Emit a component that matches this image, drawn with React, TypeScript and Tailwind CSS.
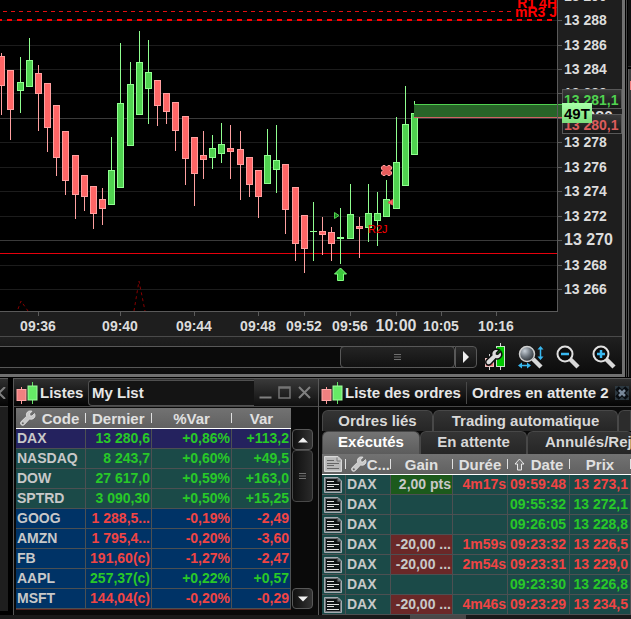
import React, { useState } from 'react';

interface Candle {
  x: number;
  high: number;
  top: number;
  bottom: number;
  low: number;
  up: boolean;
}

interface Quote {
  code: string;
  last: string;
  pct: string;
  change: string;
  up: boolean;
  group: 'selected' | 'index' | 'stock';
}

interface Order {
  id: number;
  gain: string;
  duration: string;
  time: string;
  price: string;
  buy: boolean;
}

const c = (x: number, high: number, top: number, bottom: number, low: number, up = false): Candle => ({
  x, high, top, bottom, low, up,
});

const candles: Candle[] = [
  c(1, 53, 56, 86, 115),
  c(10, 70, 70, 110, 140),
  c(20, 57, 82, 91, 113, true),
  c(29, 38, 60, 87, 87, true),
  c(38, 65, 73, 94, 131),
  c(47, 83, 83, 128, 152),
  c(56, 105, 105, 158, 176),
  c(65, 131, 131, 181, 195),
  c(75, 155, 155, 195, 219),
  c(84, 175, 175, 197, 211),
  c(93, 186, 186, 214, 229),
  c(102, 188, 199, 209, 225),
  c(111, 137, 170, 205, 205, true),
  c(120, 43, 103, 188, 188, true),
  c(130, 62, 84, 146, 146, true),
  c(139, 31, 62, 115, 115, true),
  c(148, 40, 72, 89, 124, true),
  c(157, 80, 80, 106, 126),
  c(166, 93, 93, 112, 124),
  c(175, 102, 102, 131, 151),
  c(185, 116, 116, 159, 185),
  c(194, 137, 137, 174, 206),
  c(203, 131, 155, 160, 179),
  c(212, 135, 148, 158, 169, true),
  c(221, 123, 144, 154, 163, true),
  c(230, 125, 148, 152, 179),
  c(240, 131, 149, 165, 200),
  c(249, 157, 157, 185, 197),
  c(258, 170, 170, 197, 218),
  c(267, 129, 155, 184, 184, true),
  c(276, 125, 160, 170, 193, true),
  c(285, 164, 164, 210, 234),
  c(295, 187, 187, 244, 261),
  c(304, 215, 215, 249, 273),
  c(313, 202, 231, 232, 261, true),
  c(322, 217, 231, 235, 255),
  c(331, 227, 232, 244, 261),
  c(340, 208, 237, 239, 264, true),
  c(350, 184, 214, 239, 239, true),
  c(359, 217, 226, 229, 258),
  c(368, 184, 213, 228, 242, true),
  c(377, 192, 213, 221, 246, true),
  c(386, 180, 199, 217, 217, true),
  c(396, 117, 162, 209, 209, true),
  c(405, 86, 124, 186, 186, true),
  c(414, 101, 113, 155, 155, true),
];

const priceLevels = [
  { y: -4, label: '13 290' },
  { y: 20, label: '13 288' },
  { y: 45, label: '13 286' },
  { y: 69, label: '13 284' },
  { y: 93, label: '13 282' },
  { y: 118, label: '13 280', major: true },
  { y: 142, label: '13 278' },
  { y: 167, label: '13 276' },
  { y: 191, label: '13 274' },
  { y: 216, label: '13 272' },
  { y: 240, label: '13 270', major: true },
  { y: 265, label: '13 268' },
  { y: 289, label: '13 266' },
];

const timeTicks = [
  { x: 38, label: '09:36' },
  { x: 120, label: '09:40' },
  { x: 194, label: '09:44' },
  { x: 258, label: '09:48' },
  { x: 304, label: '09:52' },
  { x: 350, label: '09:56' },
  { x: 396, label: '10:00', major: true },
  { x: 441, label: '10:05' },
  { x: 496, label: '10:16' },
];

const quotes: Quote[] = [
  { code: 'DAX', last: '13 280,6', pct: '+0,86%', change: '+113,2', up: true, group: 'selected' },
  { code: 'NASDAQ', last: '8 243,7', pct: '+0,60%', change: '+49,5', up: true, group: 'index' },
  { code: 'DOW', last: '27 617,0', pct: '+0,59%', change: '+163,0', up: true, group: 'index' },
  { code: 'SPTRD', last: '3 090,30', pct: '+0,50%', change: '+15,25', up: true, group: 'index' },
  { code: 'GOOG', last: '1 288,5...', pct: '-0,19%', change: '-2,49', up: false, group: 'stock' },
  { code: 'AMZN', last: '1 795,4...', pct: '-0,20%', change: '-3,60', up: false, group: 'stock' },
  { code: 'FB', last: '191,60(c)', pct: '-1,27%', change: '-2,47', up: false, group: 'stock' },
  { code: 'AAPL', last: '257,37(c)', pct: '+0,22%', change: '+0,57', up: true, group: 'stock' },
  { code: 'MSFT', last: '144,04(c)', pct: '-0,20%', change: '-0,29', up: false, group: 'stock' },
];

const orders: Order[] = [
  { id: 1, gain: '2,00 pts', duration: '4m17s', time: '09:59:48', price: '13 273,1', buy: false },
  { id: 2, gain: '', duration: '', time: '09:55:32', price: '13 272,1', buy: true },
  { id: 3, gain: '', duration: '', time: '09:26:05', price: '13 228,8', buy: true },
  { id: 4, gain: '-20,00 ...', duration: '1m59s', time: '09:23:32', price: '13 226,5', buy: false },
  { id: 5, gain: '-20,00 ...', duration: '2m54s', time: '09:23:31', price: '13 229,0', buy: false },
  { id: 6, gain: '', duration: '', time: '09:23:30', price: '13 226,8', buy: true },
  { id: 7, gain: '-20,00 ...', duration: '4m46s', time: '09:23:29', price: '13 234,5', buy: false },
];

const rowColors = {
  selected: 'bg-[#24225e]',
  index: 'bg-[#1b4a48]',
  stock: 'bg-[#003366]',
};

const wrenchPath =
  'M14.500 3.500L12 6L9.800 5.800L9.700 3.700L12 1.200C10.500 .6 8.500 .8 7.300 2.200C6.300 3.400 6.200 4.800 6.700 6.200L1.200 11.500C.2 12.600 .3 14 1.200 14.800C2.200 15.600 3.500 15.500 4.400 14.500L9.500 9C11 9.500 12.800 9.300 14 8C15.300 6.700 15.300 5 14.500 3.500Z';

const Chart: React.FC = () => (
  <svg
    viewBox="0 0 622 336"
    preserveAspectRatio="xMaxYMin slice"
    className="block h-[336px] w-full font-bold"
    role="img"
    aria-label="DAX"
  >
    <defs>
      <linearGradient id="tag" x1="0" y1="0" x2="0" y2="1">
        <stop offset="0" stopColor="#3a3a3a" />
        <stop offset="1" stopColor="#161616" />
      </linearGradient>
      <linearGradient id="ticks" x1="0" y1="0" x2="0" y2="1">
        <stop offset="0" stopColor="#a8ffa8" />
        <stop offset="1" stopColor="#7cdc7c" />
      </linearGradient>
    </defs>
    <rect width="622" height="336" fill="#1e1e1e" />
    <rect width="557" height="311" fill="#000" />

    <g shapeRendering="crispEdges">
      {priceLevels.map((p) => (
        <g key={p.y}>
          <rect x="0" y={p.y} width="557" height="1" fill={p.major ? '#3a3a3a' : '#1c1c1c'} />
          <rect x="558" y={p.y} width="4" height="1" fill="#5a5a5a" />
        </g>
      ))}
      <rect x="0" y="253" width="557" height="1" fill="#e6000c" />
      <path d="M3 11.5H512" stroke="#e01010" strokeDasharray="4 4" />
      <path d="M-3 20H557" stroke="#ff0000" strokeWidth="2" strokeDasharray="5 5" />

      {candles.map((k) => {
        const edge = k.up ? '#90ff90' : '#ffa0a0';
        const h = k.bottom - k.top;
        return (
          <g key={k.x}>
            <rect x={k.x} y={k.high} width="1" height={k.low - k.high} fill={edge} />
            <rect x={k.x - 3} y={k.top} width="7" height={h} fill={edge} />
            {h > 2 && (
              <rect x={k.x - 2} y={k.top + 1} width="5" height={h - 2} fill={k.up ? '#50d250' : '#ff6666'} />
            )}
          </g>
        );
      })}

      <rect x="414" y="104" width="148" height="14" fill="#286428" />
      <rect x="414" y="104" width="148" height="1" fill="#50d250" />
      <rect x="414" y="117" width="148" height="1" fill="#d06464" />
      <rect x="557" y="0" width="1" height="312" fill="#5a5a5a" />
      <rect x="0" y="311" width="558" height="1" fill="#5a5a5a" />
      {timeTicks.map((t) => (
        <rect key={t.x} x={t.x} y="312" width="1" height="4" fill="#5a5a5a" />
      ))}
    </g>

    <g fill="none" stroke="#860000" strokeDasharray="3 3">
      <path d="M18 309L21 301L28 311" />
      <path d="M134 311L139 281L145 311" />
    </g>

    {/* trade markers */}
    <path d="M340.500 268L346.500 274H343.500V280.500H337.500V274H334.500Z" fill="#3cc83c" stroke="#80ff80" />
    <path d="M334.500 212.500L339 215.500L334.500 218.500Z" fill="#208020" stroke="#50d250" />
    <path d="M392.500 199.500V205L388 202.500Z" fill="#ff6666" stroke="#d85050" />
    <path
      d="M381.500 167L383 165.500H385L386.500 167L388 165.500H390L391.500 167V169L390 170.500L391.500 172V174L390 175.500H388L386.500 174L385 175.500H383L381.500 174V172L383 170.500L381.500 169Z"
      fill="#e85c5c"
      stroke="#ff9a9a"
    />
    <text x="368" y="233" fontSize="11" fontWeight="400" fill="#ff0000">R2J</text>
    <text x="557" y="8" fontSize="14" textAnchor="end" fill="#ff0000">R1 4H</text>
    <text x="557" y="17" fontSize="14" textAnchor="end" fill="#ff0000">mR3 J</text>

    <g fill="#dcdcdc">
      {priceLevels.map((p) => (
        <text key={p.y} x="564" y={p.y + 5} fontSize={p.major ? 16 : 14}>{p.label}</text>
      ))}
      {timeTicks.map((t) => (
        <text key={t.x} x={t.x} y="331" textAnchor="middle" fontSize={t.major ? 16 : 14}>{t.label}</text>
      ))}
    </g>

    <rect x="562.500" y="89.500" width="59" height="19" fill="url(#tag)" stroke="#585858" />
    <text x="564" y="105" fontSize="14" fill="#50d250">13 281,1</text>
    <rect x="562.500" y="114.500" width="59" height="19" fill="url(#tag)" stroke="#585858" />
    <text x="564" y="130" fontSize="14" fill="#dc5c5c">13 280,1</text>
    <rect x="562" y="103" width="30" height="20" fill="url(#ticks)" />
    <text x="564" y="119" fontSize="15" fill="#000">49T</text>
  </svg>
);

const CandleIcon: React.FC = () => (
  <svg viewBox="0 0 22 22" className="h-[22px] w-[22px] shrink-0">
    <path d="M5.500 5V22" stroke="#ff9a9a" />
    <rect x="1" y="7.500" width="9" height="11" fill="#f08080" stroke="#ffa8a8" />
    <path d="M16.500 0V22" stroke="#66e066" />
    <rect x="12" y="4" width="9" height="14" fill="#66ea66" stroke="#a0ffa0" />
  </svg>
);

const WrenchIcon: React.FC = () => (
  <svg viewBox="0 0 16 16" className="h-4 w-4 shrink-0">
    <path d={wrenchPath} fill="#c8c8c8" stroke="#efefef" strokeWidth=".7" />
    <circle cx="2.800" cy="13.200" r="1" fill="#666" />
  </svg>
);

const NoteIcon: React.FC<{ light?: boolean }> = ({ light }) => (
  <svg viewBox="0 0 18 16" className="ml-[2px] block h-4 w-[18px] shrink-0">
    <path d="M.5 .5H14L17.500 4V15.500H.5Z" fill={light ? '#c0c0c0' : '#6c7276'} stroke={light ? '#d8d8d8' : '#a4acb2'} />
    <path d="M2 2H13V5H16V14H2Z" fill={light ? '#b8b8b8' : '#101416'} />
    <path d="M13 1.500V5H16.500" fill="none" stroke={light ? '#777' : '#222'} />
    <path d="M3 4.500H10M3 7.500H15M3 9.500H10M3 12.500H15" stroke={light ? '#666' : '#e0e0e0'} />
  </svg>
);

const TriangleIcon: React.FC<{ d: string }> = ({ d }) => (
  <svg viewBox="0 0 12 12" className="h-3 w-3">
    <path d={d} fill="#f0f0f0" />
  </svg>
);

const GripIcon: React.FC = () => (
  <svg viewBox="0 0 7 6" className="h-[6px] w-[7px]">
    <path d="M0 .5H7M0 3H7M0 5.500H7" stroke="#707070" />
  </svg>
);

const Magnifier: React.FC<{ plus?: boolean }> = ({ plus }) => (
  <svg viewBox="0 0 24 24" className="h-6 w-6">
    <path d="M14 14L22 22" stroke="#d8d8d8" strokeWidth="4.500" />
    <circle cx="9" cy="9" r="7.500" fill="#0c0c0c" stroke="#e0e0e0" strokeWidth="2" />
    <path d="M5 9H13" stroke="#38b8f0" strokeWidth="2.500" />
    {plus && <path d="M9 5V13" stroke="#38b8f0" strokeWidth="2.500" />}
  </svg>
);

const ChartToolbar: React.FC = () => (
  <div className="flex h-[38px] items-center border-t border-[#4a4a4a] bg-gradient-to-b from-[#202020] to-[#0c0c0c] pt-[2px]">
    <div className="flex h-[22px] min-w-0 flex-1 justify-end border-y border-[#585858] bg-[#0a0a0a]">
      <div className="-my-px flex w-[115px] items-center justify-center rounded border border-[#585858] bg-gradient-to-b from-[#242424] to-[#121212]">
        <GripIcon />
      </div>
    </div>
    <button
      type="button"
      aria-label="Suivant"
      className="flex h-[22px] w-[22px] items-center justify-center rounded-r border border-[#585858] bg-gradient-to-b from-[#2c2c2c] to-[#141414]"
    >
      <TriangleIcon d="M3 0V12L9 6Z" />
    </button>
    <div className="flex items-center gap-3 pr-[6px] pl-[7px]">
      <button type="button" aria-label="Paramètres">
        <svg viewBox="0 0 22 28" className="h-7 w-[22px]">
          <path d="M5.500 11V27M16.500 0V27" stroke="#d8d8d8" />
          <rect x="1.500" y="15.500" width="8" height="8" fill="#f07070" stroke="#e8c0c0" />
          <rect x="12.500" y="3.500" width="8" height="20" fill="#00c800" stroke="#c8e8c8" />
          <g transform="translate(2 6)">
            <path d={wrenchPath} fill="#111" stroke="#111" strokeWidth="3" />
            <path d={wrenchPath} fill="#dcdcdc" />
          </g>
        </svg>
      </button>
      <button type="button" aria-label="Zoom automatique">
        <svg viewBox="0 0 26 24" className="h-6 w-[26px]">
          <defs>
            <radialGradient id="lens" cx=".35" cy=".3" r=".8">
              <stop offset="0" stopColor="#c8d0d8" />
              <stop offset=".5" stopColor="#687078" />
              <stop offset="1" stopColor="#202428" />
            </radialGradient>
          </defs>
          <path d="M15 14L23 22" stroke="#d8d8d8" strokeWidth="4.500" />
          <circle cx="9" cy="9" r="7.500" fill="url(#lens)" stroke="#d0d0d0" strokeWidth="1.500" />
          <path d="M22.500 3V13M3 20.500H11" stroke="#38b8f0" strokeWidth="1.500" />
          <path d="M19.500 4.500L22.500 1L25.500 4.500ZM19.500 11.500L22.500 15L25.500 11.500ZM4 17.500L0 20.500L4 23.500ZM9 17.500L13 20.500L9 23.500Z" fill="#38b8f0" />
        </svg>
      </button>
      <button type="button" aria-label="Zoom arrière">
        <Magnifier />
      </button>
      <button type="button" aria-label="Zoom avant">
        <Magnifier plus />
      </button>
    </div>
  </div>
);

const ListPanel: React.FC = () => {
  const [listName, setListName] = useState('My List');

  return (
    <section className="flex w-[305px] shrink-0 flex-col border-t border-l border-[#585858] bg-[#0a0a0a] pb-1">
      <header className="flex h-7 items-center border-b border-[#484848] bg-gradient-to-b from-[#303030] to-[#050505] pl-[2px]">
        <CandleIcon />
        <label htmlFor="list-name" className="w-[50px] shrink-0 pl-[2px] text-[15px] leading-5 text-[#e6e6e6]">
          Listes
        </label>
        <input
          id="list-name"
          value={listName}
          onChange={(e) => setListName(e.target.value)}
          className="h-[26px] min-w-0 flex-1 rounded-l border border-r-0 border-[#505050] bg-[#141414] px-[3px] text-[15px] leading-5 text-[#e6e6e6] outline-none"
        />
        <div className="flex h-full w-[64px] items-center justify-around bg-gradient-to-b from-[#3a3a3a] to-[#101010] pr-1 pl-[2px]">
          <button type="button" aria-label="Réduire">
            <svg viewBox="0 0 13 13" className="h-[13px] w-[13px]">
              <path d="M.5 11.500H12.500" stroke="#808080" strokeWidth="2" />
            </svg>
          </button>
          <button type="button" aria-label="Agrandir">
            <svg viewBox="0 0 13 13" className="h-[13px] w-[13px]">
              <path d="M1 1H12V12H1Z M1 2H12" fill="none" stroke="#747474" strokeWidth="1.500" />
            </svg>
          </button>
          <button type="button" aria-label="Fermer">
            <svg viewBox="0 0 13 13" className="h-[13px] w-[13px]">
              <path d="M1 1L12 12M12 1L1 12" stroke="#808080" strokeWidth="2" />
            </svg>
          </button>
        </div>
      </header>

      <div className="flex pt-px pl-[2px]">
        <table className="w-[275px] table-fixed border-separate border-spacing-0 text-sm leading-[19px]">
          <colgroup>
            <col className="w-[70px]" />
            <col className="w-[66px]" />
            <col className="w-[80px]" />
            <col className="w-[59px]" />
          </colgroup>
          <thead>
            <tr className="h-[21px] bg-gradient-to-b from-[#727272] to-[#606060] text-[15px] text-[#e0e0e0]">
              <th className="border-b border-white p-0">
                <div className="flex items-center justify-between pl-1">
                  <WrenchIcon />
                  Code
                  <span className="h-[10px] w-px bg-[#e0e0e0]" />
                </div>
              </th>
              <th className="border-b border-white p-0">
                <div className="flex items-center justify-between pl-[6px]">
                  Dernier
                  <span className="h-[10px] w-px bg-[#e0e0e0]" />
                </div>
              </th>
              <th className="border-b border-white p-0">
                <div className="flex items-center">
                  <span className="flex-1">%Var</span>
                  <span className="h-[10px] w-px bg-[#e0e0e0]" />
                </div>
              </th>
              <th className="border-b border-white p-0">Var</th>
            </tr>
          </thead>
          <tbody>
            {quotes.map((q) => (
              <tr
                key={q.code}
                className={`h-5 text-right ${rowColors[q.group]} ${q.up ? 'text-[#28c828]' : 'text-[#f04444]'}`}
              >
                <td className="border-r border-b border-[#4c5052] p-0 pl-px text-left text-[#c8c8c8]">{q.code}</td>
                <td className="border-r border-b border-[#4c5052] p-0 pr-px whitespace-nowrap">{q.last}</td>
                <td className="border-r border-b border-[#4c5052] p-0 pr-px">{q.pct}</td>
                <td className="border-r border-b border-[#4c5052] p-0 pr-px">{q.change}</td>
              </tr>
            ))}
          </tbody>
        </table>
        <div className="mt-[21px] ml-px flex w-[21px] flex-col">
          <button
            type="button"
            aria-label="Monter"
            className="flex h-[21px] items-center justify-center rounded border border-[#585858] bg-gradient-to-r from-[#101010] to-[#343434]"
          >
            <TriangleIcon d="M1 8.500H11L6 3.500Z" />
          </button>
          <div className="flex h-[52px] items-center justify-center rounded border border-[#484848] bg-gradient-to-r from-[#101010] to-[#2a2a2a]">
            <GripIcon />
          </div>
          <button
            type="button"
            aria-label="Descendre"
            className="mt-auto flex h-[21px] items-center justify-center rounded border border-[#585858] bg-gradient-to-r from-[#101010] to-[#343434]"
          >
            <TriangleIcon d="M1 3.500H11L6 8.500Z" />
          </button>
        </div>
      </div>
      <div className="ml-[2px] h-px w-[275px] bg-[#5c2420]" />
    </section>
  );
};

const OrdersPanel: React.FC = () => {
  const [tab, setTab] = useState('Exécutés');
  const tabStyle = (name: string) =>
    tab === name
      ? 'bg-gradient-to-b from-[#747474] to-[#5c5c5c] text-white'
      : 'bg-gradient-to-b from-[#343434] to-[#262626] text-[#d8d8d8]';

  return (
    <section className="flex min-w-0 flex-1 flex-col overflow-hidden border-t border-l border-[#585858] bg-[#0a0a0a]">
      <header className="flex h-7 items-center border-b border-[#484848] bg-gradient-to-b from-[#303030] to-[#050505] pl-[2px] text-[15px] leading-5 whitespace-nowrap text-[#e6e6e6]">
        <CandleIcon />
        <h2 className="pl-[2px]">Liste des ordres</h2>
        <span className="mx-[5px] h-[22px] w-px bg-[#484848]" />
        <h2>Ordres en attente 2</h2>
        <button type="button" aria-label="Retirer" className="ml-[6px] shrink-0">
          <svg viewBox="0 0 14 14" className="h-[14px] w-[14px]">
            <rect width="14" height="14" fill="#2c3840" />
            <path d="M2 2L12 12M12 2L2 12" stroke="#080c10" strokeWidth="5" />
            <path d="M4 4L10 10M10 4L4 10" stroke="#78889a" strokeWidth="2.500" />
          </svg>
        </button>
      </header>

      <div className="mt-[3px] ml-[3px] text-[15px] leading-5 whitespace-nowrap">
        <div className="flex h-[21px]">
          {[
            { name: 'Ordres liés', width: 'w-[111px]' },
            { name: 'Trading automatique', width: 'w-[185px]' },
          ].map((t) => (
            <button
              key={t.name}
              type="button"
              onClick={() => setTab(t.name)}
              className={`shrink-0 rounded-t-md border border-b-0 border-[#484848] ${t.width} ${tabStyle(t.name)}`}
            >
              {t.name}
            </button>
          ))}
          <span className="flex-1 rounded-tl-md border border-b-0 border-[#484848] bg-[#2c2c2c]" />
        </div>
        <div className="flex h-[23px]">
          {[
            { name: 'Exécutés', width: 'w-[98px]' },
            { name: 'En attente', width: 'w-[107px]' },
            { name: 'Annulés/Rej', width: 'flex-1 pl-[17px] text-left' },
          ].map((t) => (
            <button
              key={t.name}
              type="button"
              onClick={() => setTab(t.name)}
              className={`shrink-0 rounded-t-md border border-b-0 border-[#484848] pb-[2px] ${t.width} ${tabStyle(t.name)}`}
            >
              {t.name}
            </button>
          ))}
        </div>
      </div>

      <table className="ml-[3px] w-[309px] table-fixed border-separate border-spacing-0 text-sm leading-[19px] whitespace-nowrap">
        <colgroup>
          <col className="w-[24px]" />
          <col className="w-[45px]" />
          <col className="w-[62px]" />
          <col className="w-[55px]" />
          <col className="w-[62px]" />
          <col className="w-[61px]" />
        </colgroup>
        <thead>
          <tr className="h-[21px] bg-gradient-to-b from-[#727272] to-[#606060] text-[15px] text-[#e0e0e0]">
            <th className="border-b border-white p-0">
              <div className="flex items-center justify-between">
                <NoteIcon light />
                <span className="h-[10px] w-px bg-[#e0e0e0]" />
              </div>
            </th>
            <th className="border-b border-white p-0">
              <div className="flex items-center justify-end">
                <WrenchIcon />
                <span>C...</span>
                <span className="h-[10px] w-px bg-[#e0e0e0]" />
              </div>
            </th>
            {['Gain', 'Durée'].map((h) => (
              <th key={h} className="border-b border-white p-0">
                <div className="flex items-center">
                  <span className="flex-1">{h}</span>
                  <span className="h-[10px] w-px bg-[#e0e0e0]" />
                </div>
              </th>
            ))}
            <th className="border-b border-white p-0">
              <div className="flex items-center justify-between pl-[6px]">
                <svg viewBox="0 0 11 13" className="h-[13px] w-[11px]">
                  <path d="M5.500 1L10 6H7.500V12H3.500V6H1Z" fill="#777" stroke="#e8e8e8" />
                </svg>
                Date
                <span className="h-[10px] w-px bg-[#e0e0e0]" />
              </div>
            </th>
            <th className="border-b border-white p-0">
              <div className="flex items-center">
                <span className="flex-1">Prix</span>
                <span className="h-[10px] w-px bg-[#e0e0e0]" />
              </div>
            </th>
          </tr>
        </thead>
        <tbody>
          {orders.map((o) => (
            <tr key={o.id} className={`h-5 bg-[#1b4a48] text-right ${o.buy ? 'text-[#28c828]' : 'text-[#f04444]'}`}>
              <td className="border-r border-b border-[#4c5052] p-0">
                <NoteIcon />
              </td>
              <td className="border-r border-b border-[#4c5052] p-0 pl-px text-left text-[#c8c8c8]">DAX</td>
              <td
                className={`border-r border-b border-[#4c5052] p-0 pr-px text-[#c8c8c8] ${
                  o.gain === '' ? '' : o.gain.startsWith('-') ? 'bg-[#6a2828]' : 'bg-[#1c5a1c]'
                }`}
              >
                {o.gain}
              </td>
              <td className="border-r border-b border-[#4c5052] p-0 pr-px">{o.duration}</td>
              <td className="border-r border-b border-[#4c5052] p-0 pr-[3px]">{o.time}</td>
              <td className="border-r border-b border-[#4c5052] p-0 pr-[2px]">{o.price}</td>
            </tr>
          ))}
        </tbody>
      </table>
    </section>
  );
};

const App: React.FC = () => (
  <div className="overflow-hidden bg-black font-['Liberation_Sans',Arial,sans-serif] font-bold">
    <div className="flex">
      <main className="min-w-0 flex-1 border-r-3 border-b-3 border-[#707070]">
        <Chart />
        <ChartToolbar />
      </main>
      <aside className="ml-px flex w-[5px] flex-col gap-[2px] border-l border-[#484848] pl-px">
        <div className="h-[67px] border-b border-[#303030] bg-[#101010]" />
        <div className="flex-1 border-l border-[#585858] bg-gradient-to-b from-[#404040] via-[#141414] to-[#0c0c0c] pt-3">
          <div className="ml-auto h-[9px] w-px bg-[#f08080]" />
        </div>
      </aside>
    </div>

    <div className="mt-px flex">
      <aside className="mr-[5px] flex w-2 flex-col border-t border-[#585858]">
        <div className="flex h-7 items-center border-b border-[#484848] bg-gradient-to-b from-[#303030] to-[#050505]">
          <svg viewBox="0 0 6 12" className="h-3 w-[6px]">
            <path d="M5 0L-1 6L5 12" fill="none" stroke="#808080" strokeWidth="2" />
          </svg>
        </div>
        <div className="mb-1 flex-1 bg-[#1e1e1e]" />
      </aside>
      <ListPanel />
      <OrdersPanel />
    </div>
    <footer className="flex h-1 bg-[#1a1a1a]">
      <div className="ml-[65%] h-full w-14 bg-[#484848]" />
    </footer>
  </div>
);

export default App;
